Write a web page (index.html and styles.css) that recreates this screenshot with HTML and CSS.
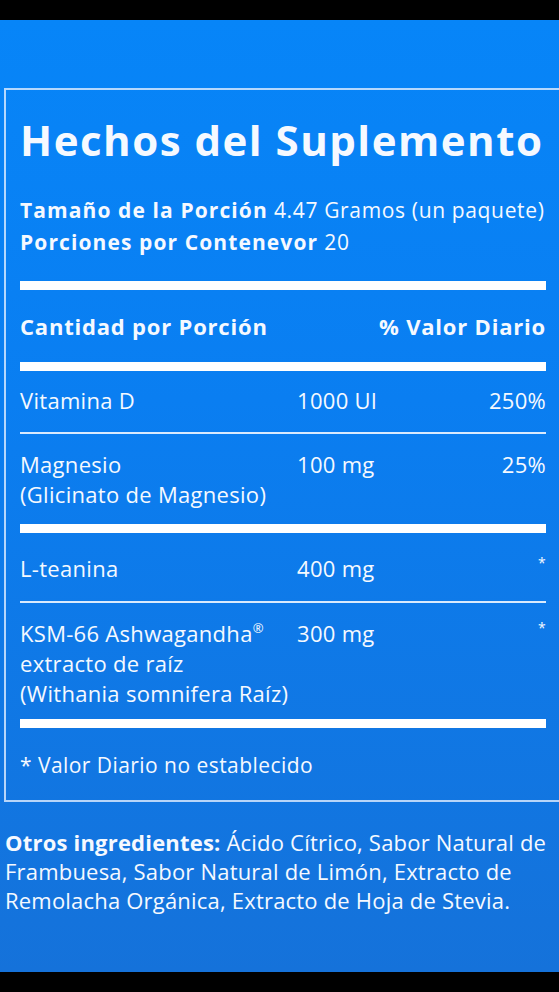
FILE: index.html
```html
<!DOCTYPE html>
<html lang="es">
<head>
<meta charset="utf-8">
<title>Hechos del Suplemento</title>
<link rel="stylesheet" href="styles.css">
</head>
<body>
<div class="bar"></div>
<main class="stage">
  <section class="facts">
    <div class="panel">
      <h1 class="title">Hechos del Suplemento</h1>
      <div class="serving">
        <p><b>Tamaño de la Porción</b> 4.47 Gramos (un paquete)</p>
        <p><b>Porciones por Contenevor</b> 20</p>
      </div>
      <div class="rule thick"></div>
      <div class="row head">
        <span class="c-name">Cantidad por Porción</span>
        <span class="c-amt"></span>
        <span class="c-dv">% Valor Diario</span>
      </div>
      <div class="rule thick"></div>
      <div class="row first">
        <span class="c-name">Vitamina D</span>
        <span class="c-amt">1000 UI</span>
        <span class="c-dv">250%</span>
      </div>
      <div class="rule thin"></div>
      <div class="row">
        <span class="c-name">Magnesio<br>(Glicinato de Magnesio)</span>
        <span class="c-amt">100 mg</span>
        <span class="c-dv">25%</span>
      </div>
      <div class="rule thick"></div>
      <div class="row lone">
        <span class="c-name">L-teanina</span>
        <span class="c-amt">400 mg</span>
        <span class="c-dv"><span class="star">*</span></span>
      </div>
      <div class="rule thin"></div>
      <div class="row last">
        <span class="c-name">KSM-66 Ashwagandha<sup class="reg">®</sup><br>extracto de raíz<br>(Withania somnifera Raíz)</span>
        <span class="c-amt">300 mg</span>
        <span class="c-dv"><span class="star">*</span></span>
      </div>
      <div class="rule thick"></div>
      <p class="note">* Valor Diario no establecido</p>
    </div>
  </section>
  <p class="others"><b>Otros ingredientes:</b> Ácido Cítrico, Sabor Natural de<br>Frambuesa, Sabor Natural de Limón, Extracto de<br>Remolacha Orgánica, Extracto de Hoja de Stevia.</p>
</main>
<div class="bar"></div>
</body>
</html>
```

FILE: styles.css
```css
html, body {
  margin: 0;
  padding: 0;
  background: #000;
}
body {
  width: 559px;
  height: 992px;
  overflow: hidden;
  font-family: "Open Sans", "Liberation Sans", sans-serif;
  color: #f5f9ff;
}
.bar {
  height: 20px;
  background: #000;
}
.stage {
  height: 952px;
  box-sizing: border-box;
  padding-top: 68px;
  background: linear-gradient(180deg, #0785f8 0%, #0a7ef1 40%, #1572da 100%);
  overflow: hidden;
}
.facts {
  margin-left: 4px;
  width: 600px;
  border: 2px solid rgba(225, 238, 255, 0.8);
  padding-left: 14px;
  box-sizing: border-box;
}
.panel {
  width: 526px;
}
.title {
  margin: 0;
  padding-top: 25px;
  font-size: 42px;
  line-height: 50px;
  font-weight: 700;
  letter-spacing: 1.5px;
  white-space: nowrap;
}
.serving {
  margin: 29px 0 23px;
  font-size: 21px;
  line-height: 32px;
  letter-spacing: 0.65px;
}
.serving p {
  margin: 0;
  white-space: nowrap;
}
.serving b {
  font-weight: 700;
  letter-spacing: 1.1px;
}
.rule {
  background: #fff;
}
.rule.thick {
  height: 9px;
}
.rule.thin {
  height: 2px;
  background: rgba(240, 246, 255, 0.9);
}
.row {
  display: grid;
  grid-template-columns: 277px 1fr auto;
  padding: 15px 0;
  font-size: 22px;
  line-height: 30px;
  letter-spacing: 0.3px;
}
.row.head {
  padding: 21px 0;
  font-weight: 700;
  letter-spacing: 0.8px;
}
.row.first {
  padding: 14px 0 17px;
}
.row.lone {
  padding: 20px 0 18px;
}
.row.last {
  padding: 15px 0 11px;
}
.c-dv {
  text-align: right;
}
.star {
  font-size: 14px;
  vertical-align: top;
  line-height: 20px;
}
.reg {
  font-size: 13px;
  line-height: 0;
  vertical-align: 9px;
}
.note {
  margin: 0;
  padding: 22px 0 20px;
  font-size: 21px;
  line-height: 30px;
  letter-spacing: 0.45px;
}
.others {
  margin: 26px 0 0 5px;
  font-size: 22px;
  line-height: 29px;
  letter-spacing: 0.2px;
  white-space: nowrap;
}
.others b {
  font-weight: 700;
}
```
